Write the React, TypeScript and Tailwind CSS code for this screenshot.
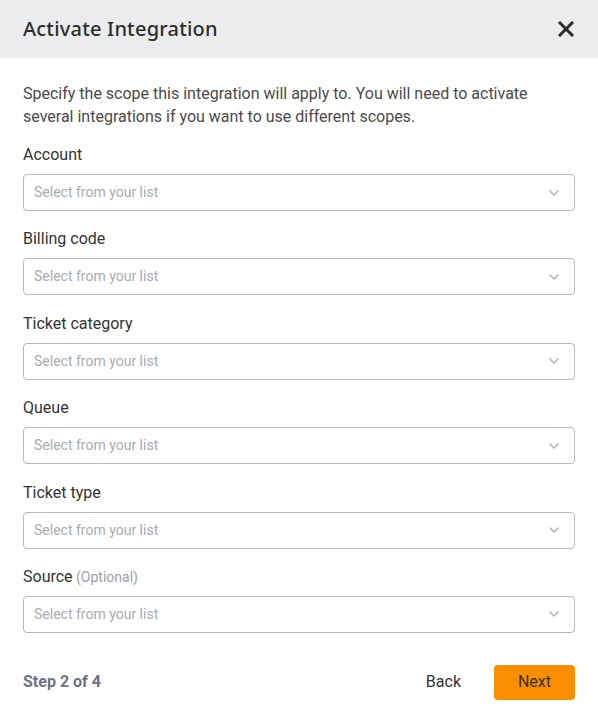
import { ChevronDown } from 'lucide-react';

const fields = [
  { label: 'Account' },
  { label: 'Billing code' },
  { label: 'Ticket category' },
  { label: 'Queue' },
  { label: 'Ticket type' },
  { label: 'Source', optional: true },
];

function SelectBox() {
  return (
    <div className="flex h-[37px] items-center justify-between rounded-[4px] border border-[#b3b8c4] bg-white pl-[10px] pr-[12px]">
      <span className="text-[14px] text-[#a6acb8]">Select from your list</span>
      <ChevronDown className="h-[16px] w-[16px] text-[#b0b5c0]" strokeWidth={2.5} />
    </div>
  );
}

export default function App() {
  return (
    <div className="flex h-[725px] w-[598px] flex-col bg-white font-['Roboto',sans-serif] text-[#333]">
      <div className="flex h-[58px] items-center justify-between bg-[#ebecee] px-[23px]">
        <h1 className="font-['Noto_Sans',sans-serif] text-[20px] font-medium tracking-[0.2px] text-[#2f2f2f]">
          Activate Integration
        </h1>
        <svg width="16" height="16" viewBox="0 0 16 16" className="mr-[1px]">
          <path d="M2 2 L14 14 M14 2 L2 14" stroke="#2b2b2b" strokeWidth="3" strokeLinecap="square" />
        </svg>
      </div>

      <div className="flex flex-1 flex-col px-[23px] pt-[24px]">
        <p className="text-[16px] leading-[23px] text-[#4a4a4a]">
          Specify the scope this integration will apply to. You will need to activate several integrations if you want
          to use different scopes.
        </p>

        <div className="mt-[15px] flex flex-col gap-[16.4px]">
          {fields.map((f) => (
            <div key={f.label}>
              <div className="mb-[8px] h-[23px] text-[16px] leading-[23px] text-[#333]">
                {f.label}
                {f.optional && <span className="text-[14px] leading-[23px] text-[#9aa0ab]"> (Optional)</span>}
              </div>
              <SelectBox />
            </div>
          ))}
        </div>

        <div className="mt-[32px] flex items-center justify-between">
          <span className="text-[16px] font-bold text-[#6b7385]">Step 2 of 4</span>
          <div className="flex items-center gap-[33px]">
            <button className="text-[16px] text-[#333]">Back</button>
            <button className="h-[35px] w-[81px] rounded-[4px] bg-[#f98e00] text-[16px] text-[#333]">
              Next
            </button>
          </div>
        </div>
      </div>
    </div>
  );
}
